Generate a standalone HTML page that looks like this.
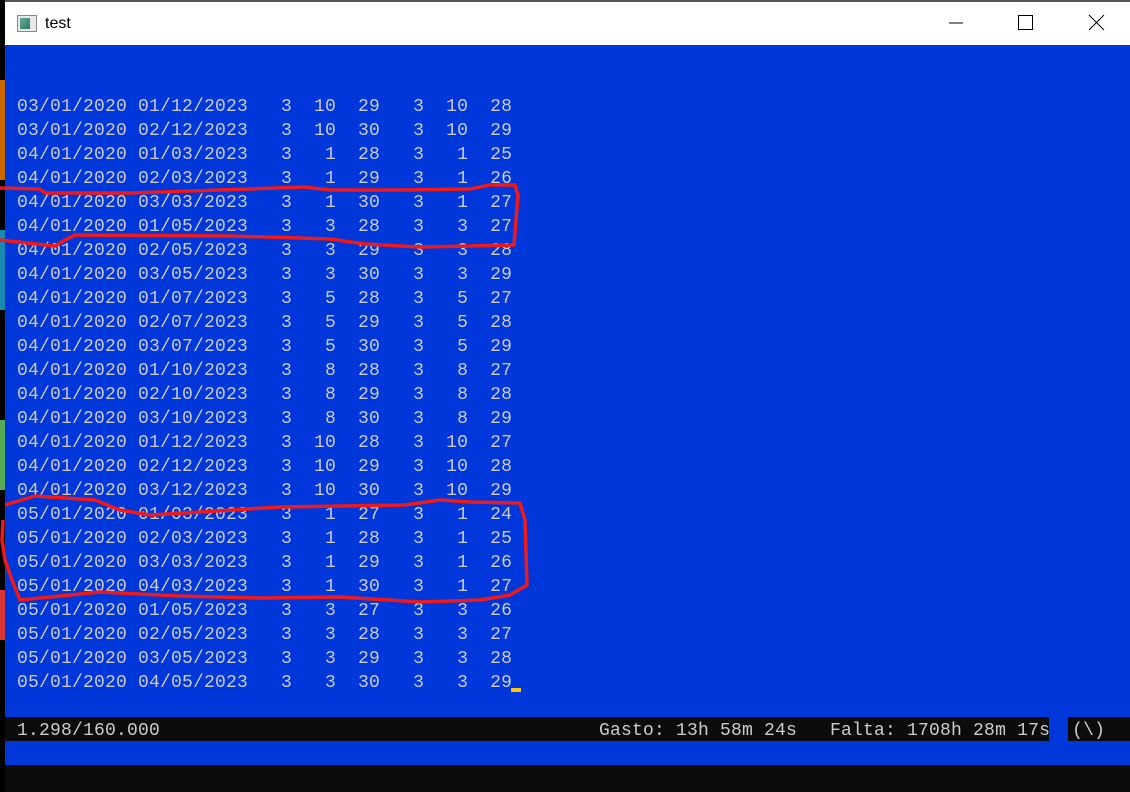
<!DOCTYPE html>
<html><head><meta charset="utf-8"><style>
html,body{margin:0;padding:0;width:1130px;height:792px;overflow:hidden;background:#0c0c0c;position:relative}
.strip{position:absolute;left:0;top:0;width:5px;height:792px;background:#000}
.title{position:absolute;left:5px;top:0;width:1125px;height:45px;background:#fff;border-top:2px solid #555;box-sizing:border-box}
.title .t{position:absolute;left:40px;top:13px;font:16px "Liberation Sans",sans-serif;color:#000}
.icon{position:absolute;left:12px;top:13px;width:20px;height:17px;border:1px solid #888;box-sizing:border-box;background:#e8e8e8}
.icon i{position:absolute;left:2px;top:2px;width:10px;height:11px;background:linear-gradient(135deg,#6a9 0%,#2a7a6a 100%)}
.blue{position:absolute;left:5px;top:45px;width:1125px;height:720px;background:#0037da}
pre{margin:0;position:absolute;font-family:"Liberation Mono",monospace;font-size:18px;letter-spacing:0.2px;color:#cccccc;line-height:24px}
.bar{position:absolute;top:717px;height:24px;background:#0c0c0c}
</style></head><body>
<div class="strip"></div>
<div style="position:absolute;left:0;top:80px;width:5px;height:100px;background:#c60"></div>
<div style="position:absolute;left:0;top:230px;width:5px;height:80px;background:#1a8ab0"></div>
<div style="position:absolute;left:0;top:420px;width:5px;height:70px;background:#5a5"></div>
<div style="position:absolute;left:0;top:590px;width:5px;height:50px;background:#d33"></div>
<div class="title"><div class="icon"><i></i></div><div class="t">test</div>
<svg style="position:absolute;left:0;top:0" width="1125" height="43">
<line x1="944" y1="21" x2="958" y2="21" stroke="#000" stroke-width="1"/>
<rect x="1013.5" y="13.5" width="14" height="14" fill="none" stroke="#000" stroke-width="1"/>
<path d="M1084 13 L1099 28 M1099 13 L1084 28" stroke="#000" stroke-width="1"/>
</svg></div>
<div class="blue"></div>
<pre style="left:17px;top:95px">03/01/2020 01/12/2023   3  10  29   3  10  28
03/01/2020 02/12/2023   3  10  30   3  10  29
04/01/2020 01/03/2023   3   1  28   3   1  25
04/01/2020 02/03/2023   3   1  29   3   1  26
04/01/2020 03/03/2023   3   1  30   3   1  27
04/01/2020 01/05/2023   3   3  28   3   3  27
04/01/2020 02/05/2023   3   3  29   3   3  28
04/01/2020 03/05/2023   3   3  30   3   3  29
04/01/2020 01/07/2023   3   5  28   3   5  27
04/01/2020 02/07/2023   3   5  29   3   5  28
04/01/2020 03/07/2023   3   5  30   3   5  29
04/01/2020 01/10/2023   3   8  28   3   8  27
04/01/2020 02/10/2023   3   8  29   3   8  28
04/01/2020 03/10/2023   3   8  30   3   8  29
04/01/2020 01/12/2023   3  10  28   3  10  27
04/01/2020 02/12/2023   3  10  29   3  10  28
04/01/2020 03/12/2023   3  10  30   3  10  29
05/01/2020 01/03/2023   3   1  27   3   1  24
05/01/2020 02/03/2023   3   1  28   3   1  25
05/01/2020 03/03/2023   3   1  29   3   1  26
05/01/2020 04/03/2023   3   1  30   3   1  27
05/01/2020 01/05/2023   3   3  27   3   3  26
05/01/2020 02/05/2023   3   3  28   3   3  27
05/01/2020 03/05/2023   3   3  29   3   3  28
05/01/2020 04/05/2023   3   3  30   3   3  29</pre>
<div style="position:absolute;left:511px;top:688px;width:10px;height:4px;background:#f9c80e"></div>
<div class="bar" style="left:5px;width:1044px"></div>
<div class="bar" style="left:1068px;width:62px"></div>
<pre style="left:17px;top:719px">1.298/160.000</pre>
<pre style="left:599px;top:719px">Gasto: 13h 58m 24s   Falta: 1708h 28m 17s  (\)</pre>
<svg style="position:absolute;left:0;top:0" width="1130" height="792">
<path d="M0 188 L40 189 L45 193 L130 193 L220 190 L305 187 L330 190 L400 190 L470 189 L490 185 L515 185 L518 195 L516 220 L514 245 L470 246 L420 247 L365 244 L330 239 L300 238 L230 236 L75 235 L65 240 L55 246 L0 240" fill="none" stroke="#f01818" stroke-width="3.5" stroke-linejoin="round"/>
<path d="M5 505 L35 496 L95 500 L120 510 L150 515 L200 512 L280 507 L405 505 L440 500 L470 502 L520 503 L525 520 L527 585 L510 595 L480 600 L420 602 L340 597 L260 598 L180 596 L100 592 L40 598 L20 600 L12 580 L5 560 L2 540 L3 520" fill="none" stroke="#f01818" stroke-width="3.5" stroke-linejoin="round"/>
</svg>
</body></html>
